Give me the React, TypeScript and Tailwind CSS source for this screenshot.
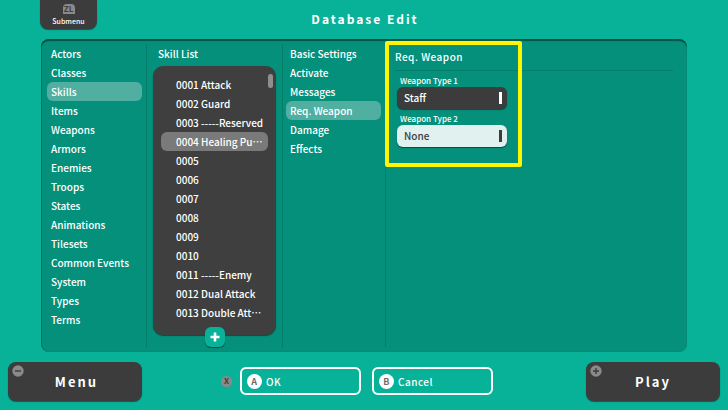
import { useState } from "react";
import clsx from "clsx";

const categories = [
  "Actors", "Classes", "Skills", "Items", "Weapons", "Armors", "Enemies", "Troops",
  "States", "Animations", "Tilesets", "Common Events", "System", "Types", "Terms",
];

const skills = [
  "0001 Attack", "0002 Guard", "0003 -----Reserved", "0004 Healing Pu…", "0005", "0006", "0007",
  "0008", "0009", "0010", "0011 -----Enemy", "0012 Dual Attack", "0013 Double Att…",
];

const sections = ["Basic Settings", "Activate", "Messages", "Req. Weapon", "Damage", "Effects"];

const weaponTypes = ["None", "Dagger", "Sword", "Axe", "Staff", "Bow"];

type MenuListProps = {
  items: string[];
  selected: string;
  onSelect: (item: string) => void;
  itemClass: string;
  activeClass: string;
};

function MenuList({ items, selected, onSelect, itemClass, activeClass }: MenuListProps) {
  return (
    <ul>
      {items.map((item) => (
        <li key={item}>
          <button
            type="button"
            onClick={() => onSelect(item)}
            className={clsx(
              "block h-[19px] w-full rounded-md text-left leading-[19px] whitespace-nowrap",
              itemClass,
              item === selected && activeClass
            )}
          >
            {item}
          </button>
        </li>
      ))}
    </ul>
  );
}

type WeaponSelectProps = {
  id: string;
  label: string;
  value: string;
  onChange: (value: string) => void;
  light?: boolean;
};

function WeaponSelect({ id, label, value, onChange, light }: WeaponSelectProps) {
  return (
    <div className="mb-1 w-[110px]">
      <label htmlFor={id} className="block pl-[3px] text-[8px] leading-3">
        {label}
      </label>
      <div className="relative">
        <select
          id={id}
          value={value}
          onChange={(e) => onChange(e.target.value)}
          className={clsx(
            "block h-[22px] w-full appearance-none rounded-md px-[7px] text-[10px] leading-[22px] shadow-[0_1px_1px_#034f44]",
            light ? "bg-[#e0f1ef] text-[#3c3c3c]" : "bg-[#3c3c3c] text-white"
          )}
        >
          {weaponTypes.map((type) => (
            <option key={type}>{type}</option>
          ))}
        </select>
        <span
          className={clsx(
            "pointer-events-none absolute top-[5px] right-[5px] h-3 w-[3px]",
            light ? "bg-[#3c3c3c]" : "bg-white"
          )}
        />
      </div>
    </div>
  );
}

function CornerIcon({ plus }: { plus?: boolean }) {
  return (
    <svg viewBox="0 0 12 12" className="absolute top-[3px] left-1 size-3" aria-hidden="true">
      <circle cx="6" cy="6" r="5.7" fill="#8a8a8a" />
      <path d={plus ? "M3 6h6M6 3v6" : "M3 6h6"} stroke="#3c3c3c" strokeWidth="1.4" />
    </svg>
  );
}

export default function App() {
  const [category, setCategory] = useState("Skills");
  const [skill, setSkill] = useState("0004 Healing Pu…");
  const [section, setSection] = useState("Req. Weapon");
  const [type1, setType1] = useState("Staff");
  const [type2, setType2] = useState("None");

  return (
    <div
      lang="ja"
      className="flex min-h-screen flex-col bg-[#07b299] [font-family:'Noto_Sans_CJK_JP',sans-serif] text-[10px] font-medium text-white"
    >
      <header className="grid h-[39px] grid-cols-[1fr_auto_1fr] items-start px-10">
        <button
          type="button"
          className="flex h-[29px] w-[57px] flex-col items-center rounded-b-lg bg-[#3c3c3c] pt-1 shadow-[0_1px_1px_#045f52]"
        >
          <span className="flex h-[10px] w-3 items-center justify-center rounded-t-sm bg-[#8a8a8a] text-[8px] leading-[10px] font-bold text-[#3c3c3c]">
            ZL
          </span>
          <span className="text-[7px] leading-[14px]">Submenu</span>
        </button>
        <h1 className="pl-[2px] text-xs leading-[38px] font-bold tracking-[2px]">Database Edit</h1>
      </header>

      <main className="mx-[41px] flex flex-1 rounded-lg bg-[#04907b] py-[5px] shadow-[inset_0_2px_1px_#034f44,inset_1px_0_1px_#047867]">
        <nav className="w-[106px] shrink-0 border-r border-[#037c6a] pr-1 pl-[6px]">
          <MenuList
            items={categories}
            selected={category}
            onSelect={setCategory}
            itemClass="px-1"
            activeClass="bg-[#50afa1]"
          />
        </nav>

        <section className="flex w-[136px] shrink-0 flex-col items-center border-r border-[#037c6a] px-[6px]">
          <h2 className="w-full pl-[5px] leading-[19px]">Skill List</h2>
          <div className="relative mt-[3px] w-full rounded-[10px] bg-[#3f3f3f] pt-[9px] pr-2 pb-[13px] pl-2 shadow-[0_1px_1px_#034f44]">
            <MenuList
              items={skills}
              selected={skill}
              onSelect={setSkill}
              itemClass="pl-[15px]"
              activeClass="bg-[#7a7a7a]"
            />
            <span className="absolute top-2 right-[3px] h-[14px] w-[5px] rounded-sm bg-[#8f8f8f]" />
          </div>
          <button
            type="button"
            aria-label="Add skill"
            className="relative -mt-2 flex size-5 items-center justify-center rounded-md bg-[#07b299] shadow-[0_1px_1px_#034f44]"
          >
            <svg viewBox="0 0 10 10" className="size-[10px]" aria-hidden="true">
              <path d="M5 .5v9M.5 5h9" stroke="white" strokeWidth="2.6" />
            </svg>
          </button>
        </section>

        <nav className="w-[103px] shrink-0 border-r border-[#037c6a] pr-1 pl-[3px]">
          <MenuList
            items={sections}
            selected={section}
            onSelect={setSection}
            itemClass="px-1"
            activeClass="bg-[#50afa1]"
          />
        </nav>

        <section className="relative flex-1 pr-[14px] pl-[9px]">
          <h2 className="mb-1 border-b border-[#037c6a] pt-[3px] pb-1 leading-[19px] tracking-wider">Req. Weapon</h2>
          <div className="pl-[2px]">
            <WeaponSelect id="weapon-type-1" label="Weapon Type 1" value={type1} onChange={setType1} />
            <WeaponSelect id="weapon-type-2" label="Weapon Type 2" value={type2} onChange={setType2} light />
          </div>
          {/* highlight frame around the weapon settings */}
          <div className="pointer-events-none absolute -top-[3px] -left-px h-[126px] w-[137px] rounded-xs border-4 border-[#fff500]" />
        </section>
      </main>

      <footer className="flex h-[58px] items-start justify-between px-2 pt-[10px]">
        <button
          type="button"
          className="relative h-[39px] w-[134px] rounded-lg bg-[#3c3c3c] pl-[3px] text-[13px] font-bold tracking-[2px] shadow-[0_1px_1px_#045f52]"
        >
          <CornerIcon />
          Menu
        </button>
        <div className="flex items-center gap-2 pt-[5px] pr-[14px]">
          <span className="flex size-[11px] items-center justify-center rounded-full bg-[#8a8a8a] text-[8px] leading-none font-bold text-[#3c3c3c]">
            X
          </span>
          <div className="flex gap-[11px]">
            <button
              type="button"
              className="flex h-7 w-[121px] items-center gap-1 rounded-md border-2 border-white pl-[5px] tracking-wider"
            >
              <span className="flex size-[15px] items-center justify-center rounded-full bg-white text-[9px] leading-none font-bold text-[#6b6b6b]">
                A
              </span>
              OK
            </button>
            <button
              type="button"
              className="flex h-7 w-[121px] items-center gap-1 rounded-md border-2 border-white pl-[5px] tracking-wider"
            >
              <span className="flex size-[15px] items-center justify-center rounded-full bg-white text-[9px] leading-none font-bold text-[#6b6b6b]">
                B
              </span>
              Cancel
            </button>
          </div>
        </div>
        <button
          type="button"
          className="relative h-[39px] w-[134px] rounded-lg bg-[#3c3c3c] text-[13px] font-bold tracking-[2px] shadow-[0_1px_1px_#045f52]"
        >
          <CornerIcon plus />
          Play
        </button>
      </footer>
    </div>
  );
}
